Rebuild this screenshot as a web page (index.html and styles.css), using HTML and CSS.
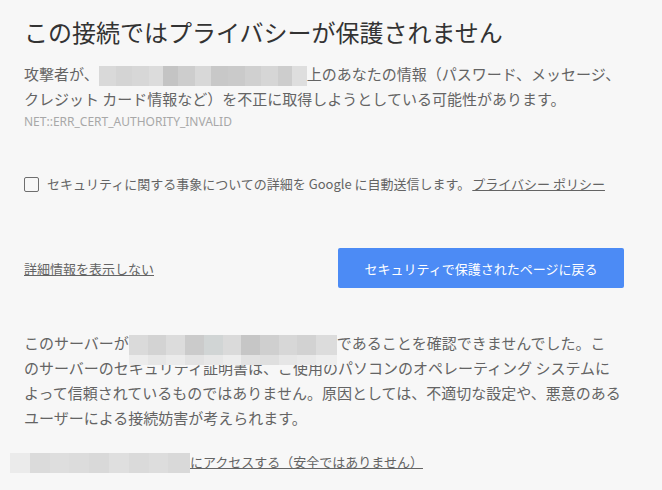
FILE: index.html
```html
<!DOCTYPE html>
<html lang="ja">
<head>
    <meta charset="UTF-8">
    <meta name="viewport" content="width=device-width, initial-scale=1.0">
    <title>プライバシー エラー</title>
    <link rel="stylesheet" href="styles.css">
</head>
<body>
    <div class="wrapper">
        <h1>この接続ではプライバシーが保護されません</h1>

        <p class="main">攻撃者が、<span class="blur blur-host"></span>上のあなたの情報（パスワード、メッセージ、クレジット カード情報など）を不正に取得しようとしている可能性があります。</p>
        <div class="error-code">NET::ERR_CERT_AUTHORITY_INVALID</div>

        <!-- 自動送信チェックボックス -->
        <label class="report">
            <span class="box"></span>
            <span>セキュリティに関する事象についての詳細を Google に自動送信します。<a href="#">プライバシー ポリシー</a></span>
        </label>

        <div class="nav">
            <a href="#" class="details-link">詳細情報を表示しない</a>
            <button class="back">セキュリティで保護されたページに戻る</button>
        </div>

        <!-- 詳細 -->
        <p class="details">このサーバーが<span class="blur blur-server"></span>であることを確認できませんでした。こ<br>のサーバーのセキュリティ証明書は、ご使用のパソコンのオペレーティング システムに<br>よって信頼されているものではありません。原因としては、不適切な設定や、悪意のある<br>ユーザーによる接続妨害が考えられます。</p>

        <p class="proceed"><span class="blur blur-proceed"></span><a href="#">にアクセスする（安全ではありません）</a></p>
    </div>
</body>
</html>
```

FILE: styles.css
```css
body {
    margin: 0;
    background-color: #f7f7f7;
    color: #646464;
    font-family: "Noto Sans CJK JP", sans-serif;
    font-size: 15px;
}

.wrapper {
    width: 601px;
    padding: 17px 0 0 24px;
}

h1 {
    margin: 0 0 14px;
    font-size: 24px;
    font-weight: normal;
    line-height: 30px;
    color: #333;
}

a {
    color: #646464;
}

.main {
    margin: 0;
    line-height: 25px;
}

.error-code {
    margin-top: 3px;
    font-family: "Noto Sans", sans-serif;
    font-size: 12px;
    line-height: 16px;
    color: #a8a8a8;
}

/* チェックボックス */
.report {
    display: flex;
    align-items: center;
    gap: 8px;
    margin-top: 44px;
    font-size: 13px;
    line-height: 20px;
}

.box {
    flex: none;
    width: 13px;
    height: 13px;
    border: 1px solid #6e6e6e;
    border-radius: 2px;
}

.report a {
    margin-left: 2px;
}

.nav {
    display: flex;
    justify-content: space-between;
    align-items: center;
    margin-top: 54px;
    font-size: 13px;
}

.back {
    width: 286px;
    height: 40px;
    margin-right: 1px;
    border: none;
    border-radius: 2px;
    background-color: #4c8bf5;
    color: #fff;
    font-family: inherit;
    font-size: 13px;
}

.details {
    margin: 42px 0 0;
    line-height: 25px;
}

.proceed {
    margin: 22px 0 0;
    font-size: 13px;
    line-height: 20px;
}

/* モザイク */
.blur {
    display: inline-block;
    height: 20px;
    vertical-align: middle;
}

.blur-host {
    width: 208px;
    background: linear-gradient(90deg,
        #d9d9d9 0 8%, #d4d4d4 8% 16%, #d7d7d7 16% 24%, #dcdcdc 24% 31%,
        #c4c4c4 31% 38%, #cdcdcd 38% 46%, #d8d8d8 46% 54%, #c8c8c8 54% 62%,
        #cacaca 62% 70%, #d0d0d0 70% 78%, #d6d6d6 78% 86%, #cdcdcd 86% 93%, #dedede 93% 100%);
}

.blur-server {
    position: relative;
    width: 208px;
    background: linear-gradient(90deg,
        #dadada 0 9%, #d3d3d3 9% 18%, #dcdcdc 18% 27%, #cbcbcb 27% 36%,
        #d1d5d5 36% 45%, #dadada 45% 54%, #c6c6c6 54% 63%, #cfcfcf 63% 72%,
        #d7d7d7 72% 81%, #d2d2d2 81% 90%, #dcdcdc 90% 100%);
}

.blur-server::after {
    content: "";
    position: absolute;
    left: 0;
    top: 20px;
    width: 100%;
    height: 10px;
    background: linear-gradient(90deg,
        #ececec 0 9%, #e6e6e6 9% 18%, #ebebeb 18% 27%, #e3e3e3 27% 36%,
        #e8e8e8 36% 45%, #ededed 45% 54%, #e2e2e2 54% 63%, #dfdfdf 63% 72%,
        #e6e6e6 72% 81%, #e9e9e9 81% 90%, #eeeeee 90% 100%);
}

.blur-proceed {
    width: 180px;
    margin-left: -14px;
    background: linear-gradient(90deg,
        #ebebeb 0 11%, #dbdbdb 11% 22%, #dedede 22% 33%, #dcdcdc 33% 44%,
        #d9d9d9 44% 55%, #dfdfdf 55% 66%, #dadada 66% 77%, #dddddd 77% 88%, #d9d9d9 88% 100%);
}
```
